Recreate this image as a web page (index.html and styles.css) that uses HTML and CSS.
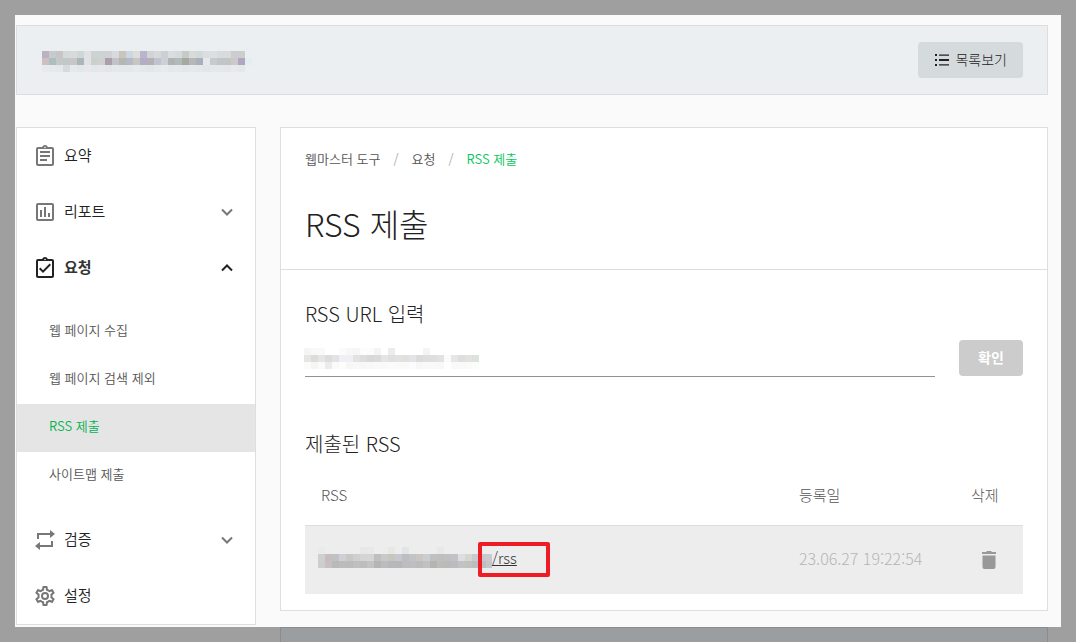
FILE: index.html
```html
<!DOCTYPE html>
<html lang="ko">
<head>
<meta charset="utf-8">
<title>RSS 제출</title>
<link rel="stylesheet" href="styles.css">
</head>
<body>
<div class="page">
  <header class="site-bar">
    <svg class="mosaic" width="210" height="21" data-mosaic="site" role="img" aria-label="사이트 주소"></svg>
    <button class="list-button" type="button">
      <svg width="16" height="16" viewBox="0 0 16 16" fill="currentColor"><path d="M1 2h2v2H1zM1 7h2v2H1zM1 12h2v2H1zM5 2.4h10v1.3H5zM5 7h10v2H5zM5 12.3h10v1.3H5z"/></svg>
      <span>목록보기</span>
    </button>
  </header>

  <div class="columns">
    <nav class="sidebar">
      <a class="nav-item" href="#">
        <svg class="icon" viewBox="0 0 24 24"><path d="M7 15h7v2H7zm0-4h10v2H7zm0-4h10v2H7zm12-4h-4.18C14.4 1.84 13.3 1 12 1s-2.4.84-2.82 2H5a2 2 0 0 0-2 2v15a2 2 0 0 0 2 2h14a2 2 0 0 0 2-2V5a2 2 0 0 0-2-2zm-7-.25a.75.75 0 1 1 0 1.5.75.75 0 0 1 0-1.5zM19 20H5V5h14z"/></svg>
        <span>요약</span>
      </a>
      <a class="nav-item" href="#">
        <svg class="icon" viewBox="0 0 24 24"><path d="M19 3H5a2 2 0 0 0-2 2v14a2 2 0 0 0 2 2h14a2 2 0 0 0 2-2V5a2 2 0 0 0-2-2zm0 16H5V5h14zM7 10h2v7H7zm4-3h2v10h-2zm4 6h2v4h-2z"/></svg>
        <span>리포트</span>
        <svg class="chevron" viewBox="0 0 12 12"><path d="M1 3.5l5 5 5-5"/></svg>
      </a>
      <a class="nav-item open" href="#">
        <svg class="icon" viewBox="0 0 24 24"><path d="M19 3h-4.18C14.4 1.84 13.3 1 12 1s-2.4.84-2.82 2H5a2 2 0 0 0-2 2v15a2 2 0 0 0 2 2h14a2 2 0 0 0 2-2V5a2 2 0 0 0-2-2zm-7-.25a.75.75 0 1 1 0 1.5.75.75 0 0 1 0-1.5zM19 20H5V5h14zM18 9l-1.4-1.4-6.6 6.6-2.6-2.6L6 13l4 4z"/></svg>
        <span>요청</span>
        <svg class="chevron" viewBox="0 0 12 12"><path d="M1 8.5l5-5 5 5"/></svg>
      </a>
      <div class="sub-menu">
        <a class="sub-item" href="#">웹 페이지 수집</a>
        <a class="sub-item" href="#">웹 페이지 검색 제외</a>
        <a class="sub-item active" href="#">RSS 제출</a>
        <a class="sub-item" href="#">사이트맵 제출</a>
      </div>
      <a class="nav-item" href="#">
        <svg class="icon" viewBox="0 0 24 24"><path d="M4 11V5h13V2l5 4-5 4V7H6v4zM20 13v6H7v3l-5-4 5-4v3h11v-4z"/></svg>
        <span>검증</span>
        <svg class="chevron" viewBox="0 0 12 12"><path d="M1 3.5l5 5 5-5"/></svg>
      </a>
      <a class="nav-item" href="#">
        <svg class="icon" viewBox="0 0 24 24"><path d="M19.43 12.98c.04-.32.07-.64.07-.98 0-.34-.03-.66-.07-.98l2.11-1.65c.19-.15.24-.42.12-.64l-2-3.46a.5.5 0 0 0-.61-.22l-2.49 1c-.52-.4-1.08-.73-1.69-.98l-.38-2.65A.49.49 0 0 0 14 2h-4a.49.49 0 0 0-.49.42l-.38 2.65c-.61.25-1.17.59-1.69.98l-2.49-1a.5.5 0 0 0-.61.22l-2 3.46c-.13.22-.07.49.12.64l2.11 1.65c-.04.32-.07.65-.07.98s.03.66.07.98l-2.11 1.65c-.19.15-.24.42-.12.64l2 3.46c.12.22.39.3.61.22l2.49-1c.52.4 1.08.73 1.69.98l.38 2.65c.03.24.24.42.49.42h4c.25 0 .46-.18.49-.42l.38-2.65c.61-.25 1.17-.59 1.69-.98l2.49 1c.23.09.49 0 .61-.22l2-3.46a.5.5 0 0 0-.12-.64zm-1.98-1.71c.04.31.05.52.05.73s-.02.43-.05.73l-.14 1.13.89.7 1.08.84-.7 1.21-1.27-.51-1.04-.42-.9.68c-.43.32-.84.56-1.25.73l-1.06.43-.16 1.13-.2 1.35h-1.4l-.35-2.48-1.06-.43c-.43-.18-.83-.41-1.23-.71l-.91-.7-1.06.43-1.27.51-.7-1.21 1.97-1.54-.14-1.13a6 6 0 0 1 0-1.48l.14-1.13-1.97-1.53.7-1.21 2.31.93.9-.68c.43-.32.84-.56 1.25-.73l1.06-.43.36-2.48h1.39l.35 2.48 1.06.43c.43.18.83.41 1.23.71l.91.7 2.33-.94.7 1.21-1.96 1.54zM12 8a4 4 0 1 0 0 8 4 4 0 0 0 0-8zm0 6a2 2 0 1 1 0-4 2 2 0 0 1 0 4z"/></svg>
        <span>설정</span>
      </a>
    </nav>

    <main class="content">
      <div class="content-head">
        <div class="breadcrumb">
          <a href="#">웹마스터 도구</a><span class="slash">/</span><a href="#">요청</a><span class="slash">/</span><a class="current" href="#">RSS 제출</a>
        </div>
        <h1>RSS 제출</h1>
      </div>

      <section class="section">
        <h2><label for="rss-url">RSS URL 입력</label></h2>
        <form class="url-form">
          <div class="field">
            <input id="rss-url" type="text">
            <svg class="mosaic field-mosaic" width="175" height="21" data-mosaic="field"></svg>
          </div>
          <button class="submit-button" type="button">확인</button>
        </form>
      </section>

      <section class="section submitted">
        <h2>제출된 RSS</h2>
        <table>
          <thead>
            <tr><th>RSS</th><th class="date">등록일</th><th class="remove">삭제</th></tr>
          </thead>
          <tbody>
            <tr>
              <td>
                <div class="feed">
                  <svg class="mosaic" width="174" height="21" data-mosaic="feed"></svg>
                  <a href="#">/rss</a>
                  <span class="marker"></span>
                </div>
              </td>
              <td class="date">23.06.27 19:22:54</td>
              <td class="remove">
                <button class="trash" type="button" aria-label="삭제"><svg width="24" height="24" viewBox="0 0 24 24" fill="#989898"><path d="M5.5 7.5h13V19a2 2 0 0 1-2 2h-9a2 2 0 0 1-2-2zM5 4h4l1-1h4l1 1h4v2H5z"/></svg></button>
              </td>
            </tr>
          </tbody>
        </table>
      </section>
    </main>
  </div>
</div>
<div class="next-panel"></div>
<script src="mosaic.js"></script>
</body>
</html>
```
FILE: styles.css
```css
* { box-sizing: border-box; }

body {
  margin: 0;
  padding: 15px 15px 0;
  min-height: 100vh;
  display: flex;
  flex-direction: column;
  background: #9f9f9f;
  color: #222;
  font-family: "Noto Sans CJK KR", sans-serif;
  font-size: 14px;
  font-weight: 300;
  line-height: 20px;
}

a { color: inherit; text-decoration: none; }
button { font: inherit; border: 0; cursor: pointer; }
h1, h2 { margin: 0; font-weight: 300; }
svg { display: block; flex: none; }

.page {
  padding: 10px 13px 2px 1px;
  background: #fafafa;
}

.site-bar {
  display: flex;
  align-items: center;
  justify-content: space-between;
  height: 70px;
  padding: 0 24px 0 25px;
  border: 1px solid #dedede;
  background: #ebeff2;
}
.site-bar .mosaic { margin-top: 3px; }

.list-button {
  display: flex;
  align-items: center;
  gap: 5px;
  height: 36px;
  padding: 0 16px;
  border-radius: 4px;
  background: #d5dadd;
  color: #222;
}
.list-button span { padding-bottom: 2px; }

.columns {
  display: flex;
  align-items: flex-start;
  gap: 24px;
  margin-top: 32px;
}

.sidebar {
  flex: 0 0 240px;
  border: 1px solid #dedede;
  background: #fff;
}

.nav-item {
  display: flex;
  align-items: center;
  gap: 7px;
  height: 56px;
  padding: 0 22px 0 16px;
  font-size: 15px;
  font-weight: 350;
}
.nav-item span { flex: 1; padding-bottom: 2px; }
.nav-item.open { font-weight: 700; color: #333; }

.icon { width: 24px; height: 24px; fill: #777; }
.open .icon { fill: #222; }
.chevron { width: 12px; height: 12px; fill: none; stroke: #777; stroke-width: 2; }
.open .chevron { stroke: #222; }

.sub-menu { padding: 12px 0; }
.sub-item {
  display: flex;
  align-items: center;
  height: 48px;
  padding: 0 32px 4px;
  font-size: 13px;
  font-weight: 350;
  color: #555;
}
.sub-item.active { background: #e5e5e5; color: #03b350; }

.content {
  flex: 1;
  min-width: 0;
  border: 1px solid #dedede;
  background: #fff;
}

.content-head {
  padding: 21px 24px 22px;
  border-bottom: 1px solid #dedede;
}
.breadcrumb { display: flex; gap: 13px; font-size: 13px; font-weight: 350; color: #555; }
.slash { color: #aaa; }
.current { color: #03c75a; }
h1 { margin-top: 30px; font-size: 32px; line-height: 48px; }

.section { padding: 30px 24px 0; }
h2 { font-size: 20px; line-height: 28px; }

.url-form { display: flex; gap: 24px; margin-top: 12px; }
.field { position: relative; flex: 1; }
.field input {
  display: block;
  width: 100%;
  height: 37px;
  padding: 0;
  border: 0;
  border-bottom: 1px solid #929294;
  background: transparent;
  font: inherit;
  outline: 0;
}
.field-mosaic { position: absolute; left: -1px; top: 8px; pointer-events: none; }
.submit-button {
  width: 64px;
  height: 36px;
  padding: 0 0 2px;
  border-radius: 4px;
  background: #ccc;
  color: #fff;
  font-weight: 700;
}

.submitted { padding-top: 53px; padding-bottom: 16px; }

table { width: 100%; margin-top: 8px; border-collapse: collapse; table-layout: fixed; }
th, td { padding: 0 16px; text-align: left; font-size: 15px; font-weight: 300; }
th { height: 59px; color: #555; }
td { height: 69px; border-top: 1px solid #dedede; background: #ededed; }
th.date, td.date { width: 168px; padding-right: 0; }
td.date { padding-bottom: 4px; font-size: 16px; color: #b5b5b5; }
th.remove, td.remove { width: 72px; padding: 0 0 0 20px; }

.feed { position: relative; display: flex; align-items: center; width: max-content; margin-left: -3px; padding-bottom: 4px; }
.feed a { color: #333; text-decoration: underline; }
.marker {
  position: absolute;
  left: 160px;
  top: -5px;
  width: 72px;
  height: 35px;
  border: 4px solid #ee1c25;
  border-radius: 2px;
  pointer-events: none;
}
.trash { display: block; width: 36px; padding: 0 6px; background: none; }

.next-panel {
  flex: 1;
  min-height: 15px;
  margin: 0 13px 0 265px;
  border: 1px solid #8c8c8c;
  border-bottom: 0;
  background: #9a9ea1;
}
```
FILE: mosaic.js
```js
// Masked addresses, drawn as rows of 7px cells.
const CELL = 7;
const MASKS = {
  site: [
    "b9b3c0 c8cacc c5c7c6 d5dad9 d7dbdc cfd6d8 dfe1e4 cdd2d5 cdd2d5 d0d1d4 d9dadd c9c5ba ccd7e1 dcdedb bbb4cd d1d3d6 d7d8da cbd1d2 d9dde0 d6dadd c7cbc6 d9dbda d4d8d8 dadee0 dcdfe0 d8dadc d8dadb cbcdce cbcdce",
    "cdbfc2 adbec1 c4c8c6 c0c8ca c9c7c6 adb5b9 e0e3e6 cdcfce cfd1d0 aba0a9 c3c2c8 b5b7b2 b4bac6 c8c5c4 b3adc5 b4b2b6 c2c3d0 cbd1d6 adb4b3 b2babe a6a8a2 b5b7b8 a9b0b9 e6e9eb c6cbcc c1c5c5 c2c5c5 cfc7c8 aea7c0 e6edf0",
    "e7ebee e5e9eb e4e8ea d3dcda e6e9eb e1e7ea e8e8e9 e3e7ea e4e8eb e2e6ea e6e9ec e4e8eb e3e8eb e6eaed e4e8eb e2e6e9 e6e9ec e7ebee e4e8ea e5e9eb e3e7e9 e6e9eb e4e8ea e3e5e7 e5e8ea e4e8ea e3e7e9 e7eaed e5e8eb"
  ],
  field: [
    "f5f5f5 f9f9f9 f9f9f9 ffffff ffffff fbfbfd f7f7f7 f6f6f6 fdfdfd fbfdfd f4f4f4 ffffff ebedec ffffff ffffff ffffff ffffff f4f4f4",
    "e6e6e3 dcdcdd e6e5e3 dcdcde e3e3e5 eff0f5 f0f0f2 e2e2e4 dddddd d8d8d8 dadad9 e5e5e6 e0e0e0 e2e2e2 e0e1dc e2e4e5 d9dbdc dededf dededc e2e2e2 fbfbfb e6e6e6 dededf e3e2df dce2e0",
    "fbfbfb f5f5f5 fafafa ebebed fafafa fefdfa f7f7f7 f8f8f8 f7f7f7 f8f8f8 f9f9f9 f9f9f9 fafbfb fafafa f9faf9 fcfcfc f7f7f8 f9f9f9 f9f9fa f8f8f8 ffffff f9f9f9 f9f9fa fafafa fafdfc"
  ],
  feed: [
    "e9ebea ededed ededed ededed ededed ededed e9e6e6 e7e8e7 ededed ededed e8e8e3 ededed e3e4e5 ededed ededed ededed ededed e7e8e8",
    "cdd0cf c7bdbe bec2c7 d0cfd4 c8c9c7 cfcfd1 d3d4d4 d4d5d5 bfbfbe c8c9c8 c6c5bf c7c8cf bdbec1 c2c3c5 cac6c0 c9ced0 bec0c2 c0bfbc c0c1bf c0c2c6 dedddf d5d5d1 c9cacf c8c7c9 c9cad0",
    "cccecd c8bfc0 b9b9bd bcbcbc bbbbbb c0bfbf bdbdbf c3c3c4 b5b5b5 bcbbbd b9b8b9 b6b7bb bebdbd bebdbf bdbcbb c1c1c1 b4b4b4 bdbcbb babab9 bbbcc0 c3c2c3 c2c1bf bcbcc1 bfbebf c5c5cb"
  ]
};

document.querySelectorAll("[data-mosaic]").forEach(svg => {
  MASKS[svg.dataset.mosaic].forEach((row, y) => {
    row.split(" ").forEach((color, x) => {
      const cell = document.createElementNS("http://www.w3.org/2000/svg", "rect");
      cell.setAttribute("x", x * CELL);
      cell.setAttribute("y", y * CELL);
      cell.setAttribute("width", CELL);
      cell.setAttribute("height", CELL);
      cell.setAttribute("fill", "#" + color);
      svg.appendChild(cell);
    });
  });
});
```
